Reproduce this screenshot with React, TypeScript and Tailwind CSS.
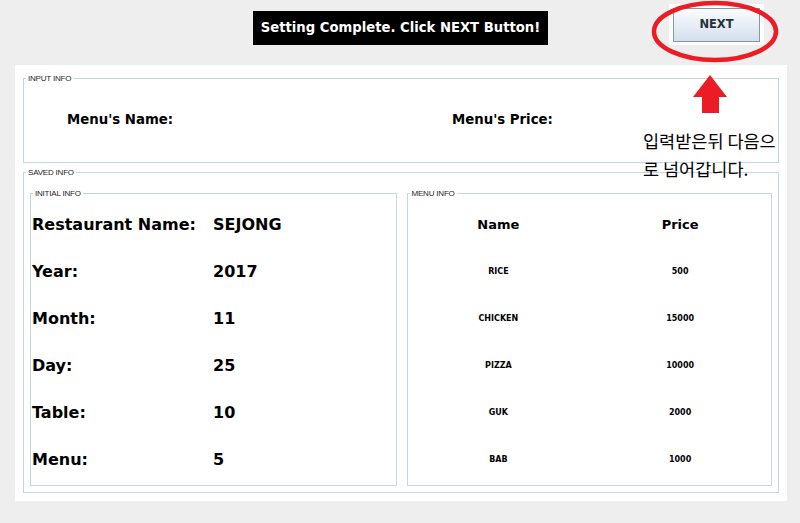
import React from "react";

const BOLD = { fontFamily: '"DejaVu Sans", Verdana, sans-serif' };

function Box({
  title,
  className,
  children,
}: {
  title: string;
  className: string;
  children?: React.ReactNode;
}) {
  return (
    <div className={"relative border border-[#c5d6e9] " + className}>
      <span
        className="absolute left-[2px] top-[-6px] bg-white px-[2px] text-[8px] leading-[11px] text-[#1e1e1e] tracking-[-0.2px]"
        style={{ fontFamily: '"Liberation Sans", Arial, sans-serif' }}
      >
        {title}
      </span>
      {children}
    </div>
  );
}

const initial: [string, string][] = [
  ["Restaurant Name:", "SEJONG"],
  ["Year:", "2017"],
  ["Month:", "11"],
  ["Day:", "25"],
  ["Table:", "10"],
  ["Menu:", "5"],
];

const menu: [string, string][] = [
  ["RICE", "500"],
  ["CHICKEN", "15000"],
  ["PIZZA", "10000"],
  ["GUK", "2000"],
  ["BAB", "1000"],
];

export default function App() {
  return (
    <div className="relative w-[800px] h-[523px] overflow-hidden bg-[#eeeeee]" style={BOLD}>
      {/* top bar */}
      <div className="flex h-[65px] items-start">
        <div className="ml-[253px] mt-[11px] flex h-[34px] w-[295px] items-center justify-center bg-black text-[13.2px] font-bold text-white">
          Setting Complete. Click NEXT Button!
        </div>
        <div className="ml-[121px] mt-[4px] flex h-[41px] w-[95px] items-start justify-center bg-white pt-[4px]">
          <button className="flex h-[34px] w-[87px] items-center justify-center border border-[#8497ad] bg-gradient-to-b from-[#fbfcfe] to-[#d3e0ee] text-[11.5px] font-bold text-[#27303c]">
            NEXT
          </button>
        </div>
      </div>

      {/* main panel */}
      <div className="ml-[15px] h-[436px] w-[772px] bg-white px-[8px] pt-[13px]">
        <Box title="INPUT INFO" className="h-[85px] w-full">
          <div className="flex h-full items-center pb-[2px] pl-[43px] text-[13.3px] font-bold text-black">
            <span className="w-[385px]">Menu's Name:</span>
            <span>Menu's Price:</span>
          </div>
        </Box>

        <Box title="SAVED INFO" className="mt-[9px] h-[321px] w-full px-[6px] pb-[6px] pt-[20px]">
          <div className="flex h-full gap-[10px]">
            <Box title="INITIAL INFO" className="h-full flex-1 pl-[1px] pt-[7px]">
              <div className="flex flex-col">
                {initial.map(([k, v]) => (
                  <div key={k} className="flex h-[47px] items-center text-[16px] font-bold text-black">
                    <span className="w-[181px]">{k}</span>
                    <span>{v}</span>
                  </div>
                ))}
              </div>
            </Box>
            <Box title="MENU INFO" className="h-full flex-1 pt-[7px]">
              <div className="flex flex-col">
                <div className="grid h-[47px] grid-cols-2 items-center text-center text-[13px] font-bold text-black">
                  <span>Name</span>
                  <span>Price</span>
                </div>
                {menu.map(([k, v]) => (
                  <div key={k} className="grid h-[47px] grid-cols-2 items-center text-center text-[8px] font-bold text-black">
                    <span>{k}</span>
                    <span>{v}</span>
                  </div>
                ))}
              </div>
            </Box>
          </div>
        </Box>
      </div>

      {/* annotations */}
      <svg
        className="pointer-events-none absolute left-0 top-0"
        width="800"
        height="523"
        viewBox="0 0 800 523"
      >
        <ellipse cx="715" cy="31.5" rx="61" ry="28.5" fill="none" stroke="#ec1c24" strokeWidth="4.5" />
        <polygon
          points="710,75 727,97 719,97 719,113 702,113 702,97 693,97"
          fill="#ec1c24"
        />
      </svg>
      <div
        className="absolute left-[643px] top-[127px] text-[17.5px] leading-[28px] text-black"
        style={{ fontFamily: '"Noto Sans CJK KR", sans-serif' }}
      >
        입력받은뒤 다음으
        <br />로 넘어갑니다.
      </div>
    </div>
  );
}
